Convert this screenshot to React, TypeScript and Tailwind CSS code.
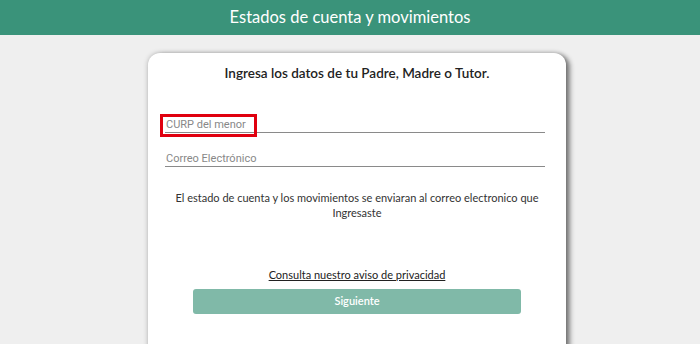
export default function App() {
  return (
    <div className="h-[344px] overflow-hidden bg-[#efefef] font-['Lato',sans-serif]">
      <header className="flex h-[35px] items-center justify-center bg-[#3a937a]">
        <h1 className="text-[16.5px] text-white">Estados de cuenta y movimientos</h1>
      </header>
      <div className="flex justify-center pl-[14px] pt-[18px]">
        <div className="h-[320px] w-[418px] rounded-[12px] bg-white shadow-[0_0_5px_rgba(0,0,0,0.25),4px_2px_5px_rgba(0,0,0,0.45)]">
          <h2 className="pt-[12px] text-center text-[13.5px] leading-[16px] font-semibold text-[#222]">
            Ingresa los datos de tu Padre, Madre o Tutor.
          </h2>
          <div className="mt-[35px] pl-[17px] pr-[21px]">
            <div className="relative h-[17px] border-b border-[#8a8a8a] pt-[1px] font-['Roboto',sans-serif] text-[11px] leading-[16px] text-[#888]">
              <span className="pl-[1px]">CURP del menor</span>
              <div className="absolute -left-[5px] -top-[2px] h-[23px] w-[97px] border-[3px] border-[#e0000f]" />
            </div>
            <div className="mt-[17px] h-[17px] border-b border-[#8a8a8a] pt-[1px] font-['Roboto',sans-serif] text-[11px] leading-[16px] text-[#888]">
              <span className="pl-[1px]">Correo Electrónico</span>
            </div>
          </div>
          <p className="mt-[23px] px-[20px] text-center text-[11px] leading-[15px] text-[#333]">
            El estado de cuenta y los movimientos se enviaran al correo electronico que Ingresaste
          </p>
          <div className="mt-[48px] text-center text-[11px] leading-[14px]">
            <a className="text-[#222] underline">Consulta nuestro aviso de privacidad</a>
          </div>
          <div className="mt-[7px] flex justify-center">
            <button className="h-[25px] w-[328px] rounded-[3px] bg-[#80b9a8] text-[11px] font-semibold text-white">
              Siguiente
            </button>
          </div>
        </div>
      </div>
    </div>
  );
}
